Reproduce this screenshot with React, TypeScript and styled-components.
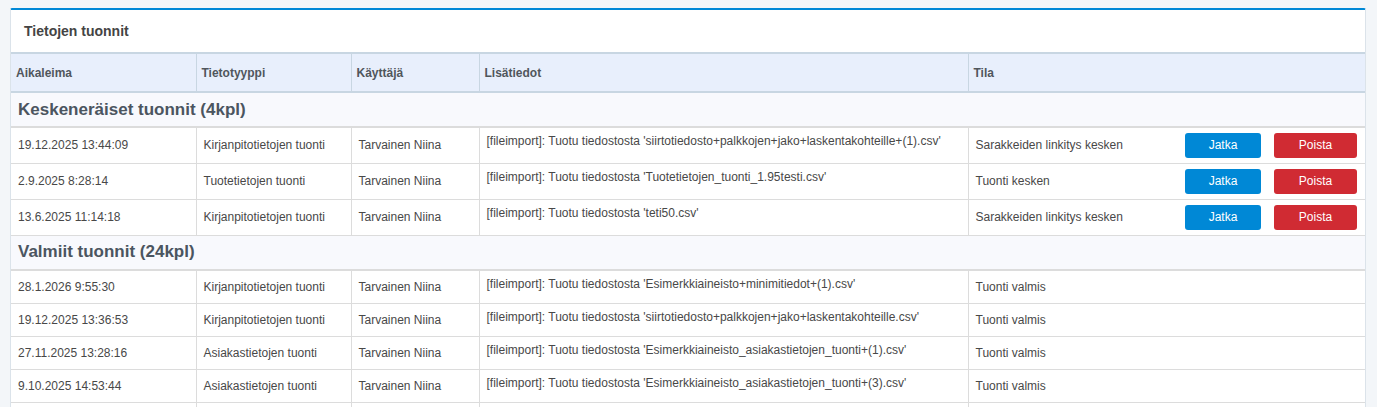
import styled, { createGlobalStyle } from "styled-components";

const GlobalStyle = createGlobalStyle`
  html, body {
    margin: 0;
    padding: 0;
    background: #f3f6f9;
    font-family: "Liberation Sans", Arial, sans-serif;
  }
`;

const Page = styled.div`
  padding: 8px 11px 0 10px;
`;

const Card = styled.section`
  background: #fff;
  border-top: 2px solid #0088d6;
  border-left: 1px solid #dbe3ea;
  border-right: 1px solid #dbe3ea;
  border-radius: 2px 2px 0 0;
`;

const CardTitle = styled.h2`
  margin: 0;
  height: 42px;
  display: flex;
  align-items: center;
  padding-left: 13px;
  font-size: 14px;
  font-weight: bold;
  color: #444;
`;

const Table = styled.table`
  width: 100%;
  border-collapse: collapse;
  table-layout: fixed;
  font-size: 12px;
`;

const Col = styled.col<{ $w?: number }>`
  width: ${(p) => (p.$w ? `${p.$w}px` : "auto")};
`;

const HeadCell = styled.th`
  box-sizing: border-box;
  height: 39px;
  padding: 0 5px;
  text-align: left;
  font-weight: bold;
  color: #50565c;
  background: #e8effc;
  border-top: 2px solid #c8d6e2;
  border-bottom: 2px solid #c8d6e2;
  border-left: 1px solid #c8d6e2;
  &:first-child {
    border-left: none;
  }
`;

const SectionCell = styled.td`
  box-sizing: border-box;
  height: 35px;
  padding: 0 7px;
  background: #f8f9fd;
  border-bottom: 2px solid #dcdcdc;
  font-size: 17px;
  font-weight: bold;
  color: #4b5560;
`;

const Cell = styled.td<{ $tall?: boolean }>`
  box-sizing: border-box;
  height: ${(p) => (p.$tall ? "36px" : "33px")};
  padding: 0 7px;
  color: #484848;
  border-bottom: 1px solid #dcdcdc;
  border-left: 1px solid #dcdcdc;
  white-space: nowrap;
  overflow: hidden;
  &:first-child {
    border-left: none;
  }
`;

const InfoCell = styled(Cell)`
  vertical-align: top;
  padding-top: 6px;
`;

const StatusWrap = styled.div`
  display: flex;
  align-items: center;
  justify-content: space-between;
  padding-right: 1px;
`;

const Actions = styled.div`
  display: flex;
  gap: 13px;
`;

const Button = styled.button<{ $variant: "primary" | "danger" }>`
  height: 25px;
  width: ${(p) => (p.$variant === "primary" ? "76px" : "83px")};
  border: none;
  border-radius: 3px;
  font-family: "Liberation Sans", Arial, sans-serif;
  font-size: 12px;
  color: #fff;
  cursor: pointer;
  background: ${(p) => (p.$variant === "primary" ? "#0088d6" : "#d02b33")};
`;

type Row = {
  time: string;
  type: string;
  user: string;
  file: string;
  status: string;
};

const pending: Row[] = [
  {
    time: "19.12.2025 13:44:09",
    type: "Kirjanpitotietojen tuonti",
    user: "Tarvainen Niina",
    file: "siirtotiedosto+palkkojen+jako+laskentakohteille+(1).csv",
    status: "Sarakkeiden linkitys kesken",
  },
  {
    time: "2.9.2025 8:28:14",
    type: "Tuotetietojen tuonti",
    user: "Tarvainen Niina",
    file: "Tuotetietojen_tuonti_1.95testi.csv",
    status: "Tuonti kesken",
  },
  {
    time: "13.6.2025 11:14:18",
    type: "Kirjanpitotietojen tuonti",
    user: "Tarvainen Niina",
    file: "teti50.csv",
    status: "Sarakkeiden linkitys kesken",
  },
];

const done: Row[] = [
  {
    time: "28.1.2026 9:55:30",
    type: "Kirjanpitotietojen tuonti",
    user: "Tarvainen Niina",
    file: "Esimerkkiaineisto+minimitiedot+(1).csv",
    status: "Tuonti valmis",
  },
  {
    time: "19.12.2025 13:36:53",
    type: "Kirjanpitotietojen tuonti",
    user: "Tarvainen Niina",
    file: "siirtotiedosto+palkkojen+jako+laskentakohteille.csv",
    status: "Tuonti valmis",
  },
  {
    time: "27.11.2025 13:28:16",
    type: "Asiakastietojen tuonti",
    user: "Tarvainen Niina",
    file: "Esimerkkiaineisto_asiakastietojen_tuonti+(1).csv",
    status: "Tuonti valmis",
  },
  {
    time: "9.10.2025 14:53:44",
    type: "Asiakastietojen tuonti",
    user: "Tarvainen Niina",
    file: "Esimerkkiaineisto_asiakastietojen_tuonti+(3).csv",
    status: "Tuonti valmis",
  },
  {
    time: "8.10.2025 10:12:05",
    type: "Asiakastietojen tuonti",
    user: "Tarvainen Niina",
    file: "Esimerkkiaineisto_asiakastietojen_tuonti.csv",
    status: "Tuonti valmis",
  },
];

const ImportRow = ({ row, actions }: { row: Row; actions?: boolean }) => (
  <tr>
    <Cell $tall={actions}>{row.time}</Cell>
    <Cell $tall={actions}>{row.type}</Cell>
    <Cell $tall={actions}>{row.user}</Cell>
    <InfoCell $tall={actions}>
      [fileimport]: Tuotu tiedostosta '{row.file}'
    </InfoCell>
    <Cell $tall={actions}>
      {actions ? (
        <StatusWrap>
          <span>{row.status}</span>
          <Actions>
            <Button $variant="primary">Jatka</Button>
            <Button $variant="danger">Poista</Button>
          </Actions>
        </StatusWrap>
      ) : (
        row.status
      )}
    </Cell>
  </tr>
);

export default function App() {
  return (
    <Page>
      <GlobalStyle />
      <Card>
        <CardTitle>Tietojen tuonnit</CardTitle>
        <Table>
          <colgroup>
            <Col $w={185} />
            <Col $w={155} />
            <Col $w={128} />
            <Col $w={489} />
            <Col />
          </colgroup>
          <thead>
            <tr>
              <HeadCell>Aikaleima</HeadCell>
              <HeadCell>Tietotyyppi</HeadCell>
              <HeadCell>Käyttäjä</HeadCell>
              <HeadCell>Lisätiedot</HeadCell>
              <HeadCell>Tila</HeadCell>
            </tr>
          </thead>
          <tbody>
            <tr>
              <SectionCell colSpan={5}>Keskeneräiset tuonnit (4kpl)</SectionCell>
            </tr>
            {pending.map((r) => (
              <ImportRow key={r.time} row={r} actions />
            ))}
            <tr>
              <SectionCell colSpan={5}>Valmiit tuonnit (24kpl)</SectionCell>
            </tr>
            {done.map((r) => (
              <ImportRow key={r.time} row={r} />
            ))}
          </tbody>
        </Table>
      </Card>
    </Page>
  );
}
